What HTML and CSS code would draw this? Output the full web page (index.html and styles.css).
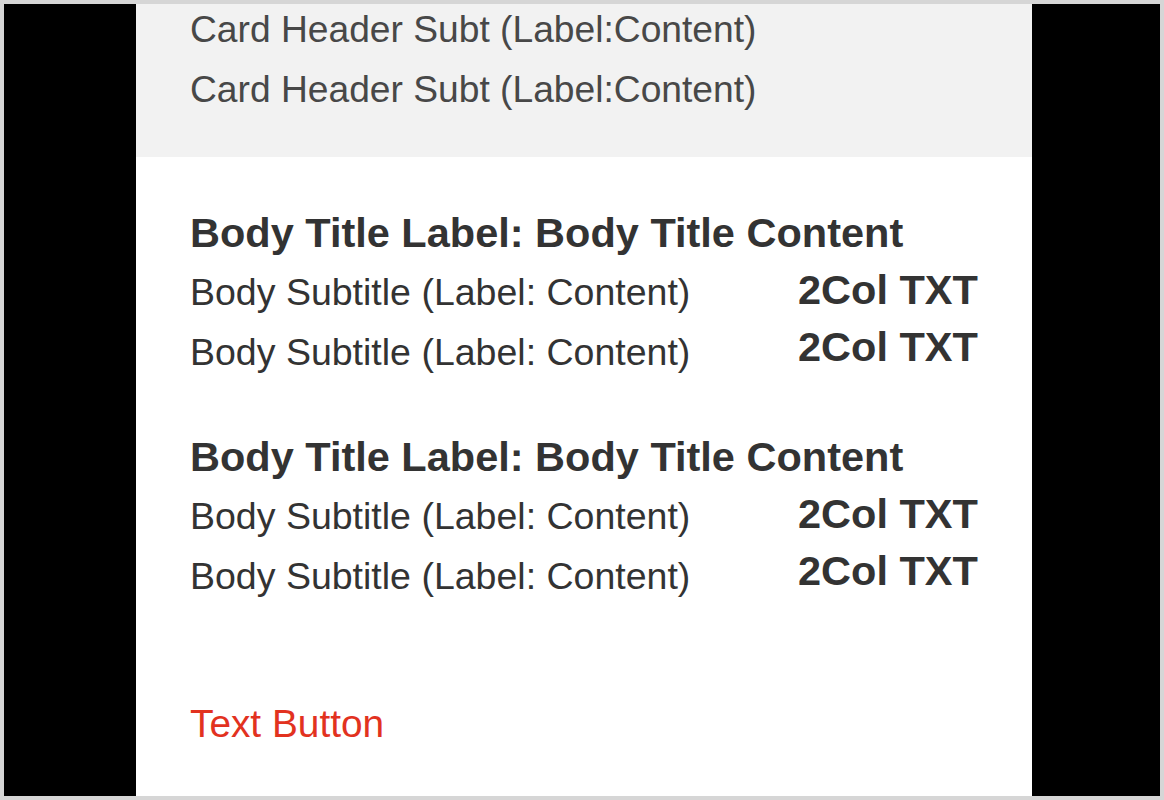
FILE: index.html
```html
<!DOCTYPE html>
<html>
<head>
<meta charset="utf-8">
<link rel="stylesheet" href="styles.css">
</head>
<body>
<div class="frame">
  <div class="card">
    <div class="card-header">
      <div class="header-lines">
        <div class="header-sub">Card Header Subt (Label:Content)</div>
        <div class="header-sub">Card Header Subt (Label:Content)</div>
      </div>
    </div>
    <div class="card-body">
      <div class="section">
        <div class="body-title">Body Title Label: Body Title Content</div>
        <div class="two-col">
          <div class="col-left">
            <div class="body-sub">Body Subtitle (Label: Content)</div>
            <div class="body-sub">Body Subtitle (Label: Content)</div>
          </div>
          <div class="col-right">
            <div class="col-txt">2Col TXT</div>
            <div class="col-txt">2Col TXT</div>
          </div>
        </div>
      </div>
      <div class="section section-next">
        <div class="body-title">Body Title Label: Body Title Content</div>
        <div class="two-col">
          <div class="col-left">
            <div class="body-sub">Body Subtitle (Label: Content)</div>
            <div class="body-sub">Body Subtitle (Label: Content)</div>
          </div>
          <div class="col-right">
            <div class="col-txt">2Col TXT</div>
            <div class="col-txt">2Col TXT</div>
          </div>
        </div>
      </div>
      <div class="text-button">Text Button</div>
    </div>
  </div>
</div>
</body>
</html>
```

FILE: styles.css
```css
html, body {
  margin: 0;
  padding: 0;
}

body {
  font-family: "Liberation Sans", Arial, Helvetica, sans-serif;
  width: 1164px;
  height: 800px;
  overflow: hidden;
}

.frame {
  box-sizing: border-box;
  width: 1164px;
  height: 800px;
  border: 4px solid #d6d6d6;
  background: #000;
  display: flex;
  overflow: hidden;
}

.card {
  margin-left: 132px;
  width: 896px;
  height: 792px;
  background: #fff;
  overflow: hidden;
  display: flex;
  flex-direction: column;
}

.card-header {
  background: #f2f2f2;
  height: 153px;
  padding-left: 54px;
  box-sizing: border-box;
  overflow: hidden;
}

.header-lines {
  margin-top: -5px;
}

.header-sub {
  font-size: 37.2px;
  line-height: 60px;
  color: #484848;
  white-space: nowrap;
}

.card-body {
  padding: 47px 0 0 54px;
}

.section-next {
  margin-top: 46px;
}

.body-title {
  font-size: 41.5px;
  font-weight: bold;
  line-height: 58px;
  color: #333;
  white-space: nowrap;
}

.two-col {
  display: grid;
  grid-template-columns: 608px auto;
}

.body-sub {
  font-size: 37.5px;
  line-height: 60px;
  color: #333;
  white-space: nowrap;
}

.col-right {
  margin-top: -1px;
}

.col-txt {
  font-size: 41.5px;
  font-weight: bold;
  line-height: 57px;
  color: #333;
  white-space: nowrap;
}

.text-button {
  margin-top: 96px;
  font-size: 38.8px;
  line-height: 44px;
  color: #e2321f;
}
```
